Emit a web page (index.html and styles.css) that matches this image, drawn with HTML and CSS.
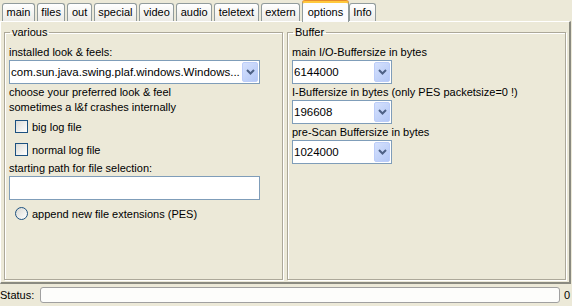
FILE: index.html
```html
<!DOCTYPE html>
<html lang="en">
<head>
    <meta charset="UTF-8">
    <title>Options</title>
    <link rel="stylesheet" href="styles.css">
</head>
<body>
    <div class="tabs">
        <div class="tab">main</div>
        <div class="tab">files</div>
        <div class="tab">out</div>
        <div class="tab">special</div>
        <div class="tab">video</div>
        <div class="tab">audio</div>
        <div class="tab">teletext</div>
        <div class="tab">extern</div>
        <div class="tab active">options</div>
        <div class="tab next">Info</div>
    </div>
    <div class="panel">
        <fieldset class="group">
            <legend>various</legend>
            <div class="label">installed look &amp; feels:</div>
            <div class="combo wide">
                <span class="value">com.sun.java.swing.plaf.windows.Windows...</span>
                <span class="arrow"><svg width="9" height="6" viewBox="0 0 9 6"><polyline points="1,1 4.5,4.5 8,1" fill="none" stroke="#4d6185" stroke-width="2"/></svg></span>
            </div>
            <div class="label">choose your preferred look &amp; feel</div>
            <div class="label">sometimes a l&amp;f crashes internally</div>
            <div class="check"><span class="box"></span>big log file</div>
            <div class="check"><span class="box"></span>normal log file</div>
            <div class="label">starting path for file selection:</div>
            <div class="field"></div>
            <div class="check"><span class="box round"></span>append new file extensions (PES)</div>
        </fieldset>
        <fieldset class="group">
            <legend>Buffer</legend>
            <div class="label">main I/O-Buffersize in bytes</div>
            <div class="combo">
                <span class="value">6144000</span>
                <span class="arrow"><svg width="9" height="6" viewBox="0 0 9 6"><polyline points="1,1 4.5,4.5 8,1" fill="none" stroke="#4d6185" stroke-width="2"/></svg></span>
            </div>
            <div class="label">I-Buffersize in bytes (only PES packetsize=0 !)</div>
            <div class="combo">
                <span class="value">196608</span>
                <span class="arrow"><svg width="9" height="6" viewBox="0 0 9 6"><polyline points="1,1 4.5,4.5 8,1" fill="none" stroke="#4d6185" stroke-width="2"/></svg></span>
            </div>
            <div class="label">pre-Scan Buffersize in bytes</div>
            <div class="combo">
                <span class="value">1024000</span>
                <span class="arrow"><svg width="9" height="6" viewBox="0 0 9 6"><polyline points="1,1 4.5,4.5 8,1" fill="none" stroke="#4d6185" stroke-width="2"/></svg></span>
            </div>
        </fieldset>
    </div>
    <div class="status">
        <span class="status-label">Status:</span>
        <div class="bar"></div>
        <span class="status-count">0</span>
    </div>
</body>
</html>
```

FILE: styles.css
```css
body {
    margin: 0;
    width: 572px;
    height: 306px;
    background: #ece9d8;
    font-family: "Liberation Sans", Arial, sans-serif;
    font-size: 11px;
    color: #000;
    overflow: hidden;
}
.tabs {
    display: flex;
    align-items: flex-end;
    height: 21px;
    padding-left: 2px;
    position: relative;
    z-index: 1;
}
.tab {
    height: 17px;
    line-height: 17px;
    padding: 0 3.5px;
    margin-right: 2px;
    border: 1px solid #919b9c;
    border-bottom: none;
    border-radius: 3px 3px 0 0;
    background: linear-gradient(#ffffff, #ecebe6);
}
.tab.active {
    height: 19px;
    line-height: 18px;
    margin-bottom: -1px;
    margin-right: 0;
    padding: 0 4.5px;
    border-top: 2px solid #ffc83c;
    box-shadow: 0 -1px 0 #e68b2c;
    background: #fcfcfe;
}
.panel {
    display: grid;
    grid-template-columns: 1fr 1fr;
    gap: 4px;
    height: 254px;
    padding: 4px 3px 2px 3px;
    border-top: 1px solid #ffffff;
    border-left: 1px solid #ffffff;
    border-right: 2px solid #8a8a80;
    border-bottom: 2px solid #8a8a80;
    margin-right: 1px;
}
.group {
    margin: 0;
    padding: 6px 4px 0 4px;
    border: 1px solid #aca899;
    box-shadow: inset 1px 1px 0 #ffffff, 1px 1px 0 #ffffff;
    min-width: 0;
}
.group legend {
    padding: 0 2px;
    margin-left: 1px;
    line-height: 13px;
}
.label {
    height: 15px;
    line-height: 15px;
    white-space: nowrap;
}
.combo {
    display: flex;
    align-items: center;
    width: 100px;
    height: 24px;
    border: 1px solid #7f9db9;
    background: #ffffff;
    margin-bottom: 1px;
    box-sizing: border-box;
}
.combo.wide {
    width: 251px;
}
.combo .value {
    flex: 1;
    padding-left: 1px;
    white-space: nowrap;
    overflow: hidden;
    font-size: 11.5px;
}
.arrow {
    display: flex;
    align-items: center;
    justify-content: center;
    width: 14px;
    height: 18px;
    margin-right: 1px;
    border: 1px solid #bccdf9;
    border-radius: 2px;
    background: linear-gradient(135deg, #d5e1fd, #b4c8f6);
}
.check {
    display: flex;
    align-items: center;
    height: 23px;
    padding-left: 6px;
    gap: 4px;
}
.box {
    width: 11px;
    height: 11px;
    border: 1px solid #1c5180;
    background: linear-gradient(135deg, #dcdcd7, #ffffff);
}
.box.round {
    border-radius: 50%;
    background: linear-gradient(135deg, #d8d8d2, #ffffff);
}
.field {
    width: 251px;
    height: 24px;
    box-sizing: border-box;
    border: 1px solid #7f9db9;
    background: #ffffff;
    margin-bottom: 2px;
}
.status {
    display: flex;
    align-items: center;
    height: 22px;
}
.status-label {
    width: 40px;
}
.bar {
    width: 518px;
    height: 14px;
    border: 1px solid #a0a0a0;
    border-radius: 3px;
    background: #fdfdfb;
}
.status-count {
    margin-left: 4px;
}
```
